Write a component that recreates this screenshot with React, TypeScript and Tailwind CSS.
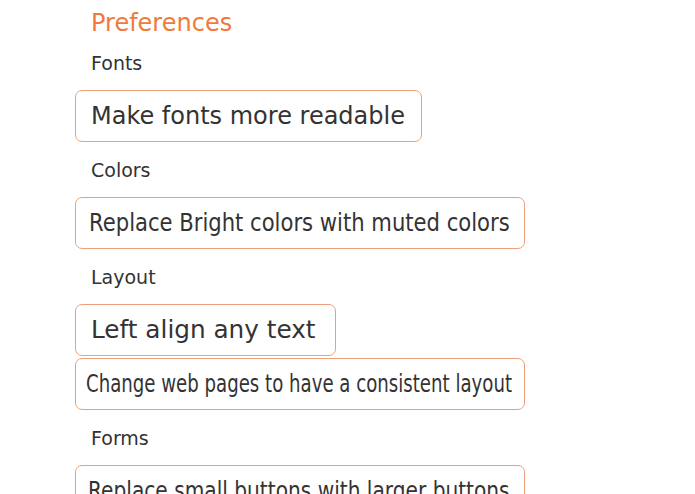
import React from 'react';

type Option = { text: string; wide?: boolean; squeeze?: string; box?: string };

const sections: { label: string; options: Option[] }[] = [
  { label: 'Fonts', options: [{ text: 'Make fonts more readable', box: 'w-[347px] pl-[15px]' }] },
  {
    label: 'Colors',
    options: [{ text: 'Replace Bright colors with muted colors', wide: true, squeeze: 'scale-x-[0.88]', box: 'pl-[13px]' }],
  },
  {
    label: 'Layout',
    options: [
      { text: 'Left align any text', box: 'w-[261px] pl-[15px]', squeeze: 'scale-x-[1.03]' },
      { text: 'Change web pages to have a consistent layout', wide: true, squeeze: 'scale-x-[0.756]', box: 'pl-[10px]' },
    ],
  },
  {
    label: 'Forms',
    options: [{ text: 'Replace small buttons with larger buttons', wide: true, squeeze: 'scale-x-[0.84]', box: 'pl-[12px]' }],
  },
];

function OptionButton({ option }: { option: Option }) {
  return (
    <button
      className={`flex h-[52px] items-center overflow-hidden rounded-[7px] border-[1.5px] border-[#ef9f7b] bg-white text-left text-[24px] text-[#333333] ${
        option.wide ? 'w-[450px]' : ''
      } ${option.box ?? ''}`}
    >
      {option.squeeze ? (
        <span className={`inline-block origin-left whitespace-nowrap ${option.squeeze}`}>{option.text}</span>
      ) : (
        <span className="whitespace-nowrap">{option.text}</span>
      )}
    </button>
  );
}

export default function App() {
  return (
    <div className="min-h-screen bg-white pl-[75px] pt-[7px] font-['DejaVu_Sans',sans-serif]">
      <h1 className="pl-4 text-[24px] leading-[32px] text-[#f07a3a]">Preferences</h1>
      <div className="flex flex-col items-start">
        {sections.map((section, i) => (
          <div key={section.label} className="flex flex-col items-start gap-[2px]">
            <div
              className={`pl-4 text-[19px] leading-[28px] text-[#333333] mb-[11px] ${
                i === 0 ? 'mt-[10px]' : 'mt-[14px]'
              }`}
            >
              {section.label}
            </div>
            {section.options.map((option) => (
              <OptionButton key={option.text} option={option} />
            ))}
          </div>
        ))}
      </div>
    </div>
  );
}
